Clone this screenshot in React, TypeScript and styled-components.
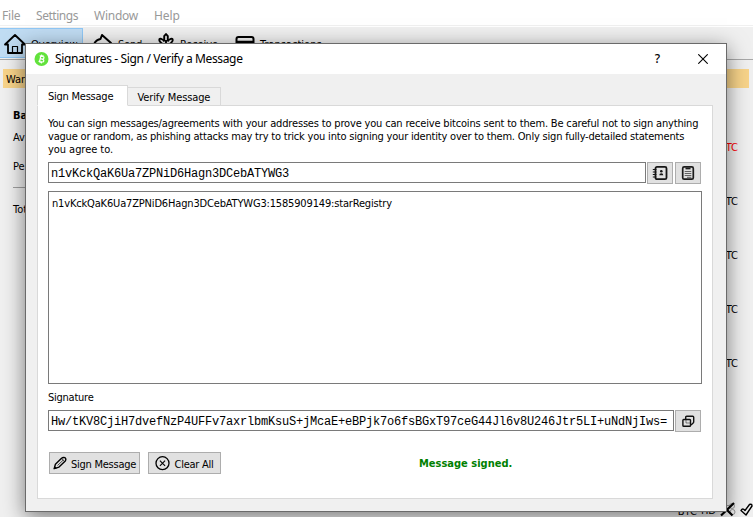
import React from "react";
import styled, { createGlobalStyle } from "styled-components";

const Global = createGlobalStyle`
  * { box-sizing: border-box; }
  html, body { margin: 0; padding: 0; overflow: hidden; }
  body {
    font-family: "DejaVu Sans Condensed", "DejaVu Sans", Tahoma, sans-serif;
    font-stretch: condensed;
    font-size: 11px;
    line-height: 13px;
    color: #000;
  }
`;

const Label = styled.span<{ $ls?: number }>`
  display: block;
  white-space: pre;
  letter-spacing: ${(p) => p.$ls ?? 0}px;
`;

const Desktop = styled.div`
  position: relative;
  width: 753px;
  height: 517px;
  overflow: hidden;
  background: #f0f0f0;
  display: flex;
  flex-direction: column;
`;

const MenuBar = styled.div`
  height: 27px;
  flex: none;
  display: flex;
  padding: 8px 0 0 2px;
  background: #fff;
  border-bottom: 1px solid #fff;
  box-shadow: inset 0 -1px 0 #f0f0f0;
  font-family: "Noto Sans", sans-serif;
  font-stretch: normal;
  font-size: 12px;
  line-height: 15px;
  color: #999;
`;

const MenuItem = styled.span<{ $w: number; $ls: number }>`
  width: ${(p) => p.$w}px;
  letter-spacing: ${(p) => p.$ls}px;
`;

const Toolbar = styled.div`
  height: 33px;
  flex: none;
  display: flex;
  padding-top: 1px;
  border-bottom: 1px solid #a8a8a8;
`;

const Tool = styled.div<{ $w: number; $pl?: number; $active?: boolean }>`
  width: ${(p) => p.$w}px;
  height: 30px;
  display: flex;
  align-items: center;
  gap: 5px;
  padding: 2px 0 0 ${(p) => p.$pl ?? 4}px;
  border: 1px solid ${(p) => (p.$active ? "#90c8f6" : "transparent")};
  border-left: 0;
  background: ${(p) => (p.$active ? "#c0dcf3" : "transparent")};
`;

const Warning = styled.div`
  height: 19px;
  flex: none;
  margin: 9px 4px 0 3px;
  padding: 4px 3px 0;
  background: #f8d48a;
`;

const Overview = styled.div`
  flex: 1;
  display: flex;
  justify-content: space-between;
  padding: 0 15px 0 13px;
`;

const Balances = styled.div`
  width: 300px;
  padding-top: 21px;
`;

const BalanceRow = styled.div<{ $h: number; $bold?: boolean }>`
  height: ${(p) => p.$h}px;
  font-weight: ${(p) => (p.$bold ? 700 : 400)};
`;

const Rule = styled.div`
  height: 1px;
  margin-bottom: 15px;
  background: #a0a0a0;
`;

const Amounts = styled.div`
  display: flex;
  flex-direction: column;
  gap: 41px;
  padding-top: 53px;
`;

const Amount = styled.div<{ $debit?: boolean }>`
  text-align: right;
  color: ${(p) => (p.$debit ? "#f00" : "#000")};
`;

const StatusBar = styled.div`
  height: 16px;
  flex: none;
  display: flex;
  justify-content: flex-end;
  align-items: flex-start;
  gap: 4px;
  padding-top: 1px;
`;

const StatusText = styled.span<{ $up?: boolean }>`
  padding-top: ${(p) => (p.$up ? 2 : 3)}px;
`;

const Dialog = styled.section`
  position: absolute;
  left: 25px;
  top: 43px;
  width: 702px;
  height: 469px;
  display: flex;
  flex-direction: column;
  border: 1px solid #6a6a6a;
  background: #f0f0f0;
  box-shadow: 0 5px 20px rgba(0, 0, 0, 0.5);
`;

const TitleBar = styled.header`
  height: 30px;
  flex: none;
  display: flex;
  align-items: center;
  background: #fff;
  padding: 0 18px 0 8px;
`;

const Title = styled.span`
  flex: 1;
  padding-left: 6px;
  font: 12px/16px "Noto Sans", sans-serif;
  letter-spacing: -0.36px;
`;

const HelpMark = styled.span`
  margin-right: 38px;
  font: 500 12px/16px "Noto Sans", sans-serif;
`;

const Tabs = styled.div`
  height: 21px;
  margin: 11px 0 -1px 11px;
  flex: none;
  display: flex;
  align-items: flex-end;
`;

const Tab = styled.div<{ $active?: boolean }>`
  position: relative;
  width: ${(p) => (p.$active ? 91 : 94)}px;
  height: ${(p) => (p.$active ? 21 : 19)}px;
  margin-left: ${(p) => (p.$active ? 0 : -1)}px;
  padding: ${(p) => (p.$active ? "4px 0 0 10px" : "3px 0 0 9.5px")};
  border: 1px solid #d9d9d9;
  border-bottom-color: ${(p) => (p.$active ? "#fff" : "#d9d9d9")};
  background: ${(p) => (p.$active ? "#fff" : "#f0f0f0")};
  z-index: ${(p) => (p.$active ? 1 : 0)};
`;

const Panel = styled.div`
  width: 676px;
  height: 394px;
  margin-left: 11px;
  padding: 11px 10px 0;
  border: 1px solid #d9d9d9;
  background: #fff;
`;

const Row = styled.div<{ $mt: number }>`
  display: flex;
  margin-top: ${(p) => p.$mt}px;
`;

const Field = styled.div<{ $w: number }>`
  width: ${(p) => p.$w}px;
  height: 21px;
  padding: 4px 0 0 2px;
  border: 1px solid #7a7a7a;
  background: #fff;
  font: 12px/14px "Liberation Mono", "Courier New", monospace;
  letter-spacing: -0.2px;
  white-space: pre;
`;

const MessageBox = styled.div`
  width: 654px;
  height: 193px;
  margin-top: 7px;
  padding: 5px 3px;
  border: 1px solid #7a7a7a;
`;

const Button = styled.button<{ $w: number; $ml: number }>`
  width: ${(p) => p.$w}px;
  height: 22px;
  margin: 0 0 0 ${(p) => p.$ml}px;
  padding: 0;
  display: flex;
  align-items: center;
  justify-content: center;
  gap: 4px;
  border: 1px solid #adadad;
  background: #e1e1e1;
  color: #000;
  font: inherit;
`;

const ButtonText = styled(Label)`
  padding-top: 2px;
`;

const Result = styled.div`
  margin-left: 198px;
  padding-top: 5px;
  font-weight: 700;
  color: #008000;
`;

const HouseIcon = () => (
  <svg width="22" height="22" viewBox="0 0 22 22" fill="none" stroke="#000" strokeWidth="1.8" strokeLinejoin="round" strokeLinecap="round">
    <path d="M1 11.500 11 2l10 9.500h-3v8.500H4v-8.500z" />
    <path d="M8.500 19.500v-6h5v6" strokeWidth="1.2" />
  </svg>
);

const SendIcon = () => (
  <svg width="22" height="22" viewBox="0 0 22 22" fill="none" stroke="#000" strokeWidth="2" strokeLinejoin="round">
    <path d="M2 18C1.500 11 5 6.500 9.500 6L11 2l9 8-9 8v-4c-4 0-7 1-9 4z" />
  </svg>
);

const ReceiveIcon = () => (
  <svg width="18" height="24" viewBox="0 0 18 24" fill="none" stroke="#000" strokeWidth="1.9" strokeLinejoin="round">
    <path d="M7.200 9V4.200L9 2l1.800 2.200V9" />
    <path d="M7.500 9.500C6 7 2 5.500 2.300 8.200S5.500 12 9 14.500c3.500-2.500 6.500-3.600 6.700-6.300S12 7 10.500 9.500M9 8v13M2.500 14c1 4 3.500 5 6.500 5s5.500-1 6.500-5" />
  </svg>
);

const CardIcon = () => (
  <svg width="20" height="18" viewBox="0 0 20 18" fill="none" stroke="#000" strokeWidth="2">
    <rect x="1.500" y="2" width="17" height="14" rx="2" />
    <path d="M2 7h16" strokeWidth="2.500" />
  </svg>
);

const CoinIcon = () => (
  <svg width="15" height="15" viewBox="0 0 15 15">
    <circle cx="7.500" cy="7" r="7" fill="#62e23c" />
    <g transform="rotate(12 7.500 7)" fill="none" stroke="#fff" strokeWidth="1.200">
      <path d="M5 4.200h3.200q1.500 0 1.500 1.300T8.200 6.900H6.100M8.200 6.900q2 0 2 1.500t-2 1.400H5M6.200 4.200v5.600M6.700 2.800v1.200M8.200 2.800v1.200M6.700 10v1.200M8.200 10v1.200" />
    </g>
  </svg>
);

const CloseIcon = () => (
  <svg width="10" height="10" viewBox="0 0 10 10" stroke="#000" strokeWidth="1.100">
    <path d="M.3.300l9.400 9.400M9.700.3.300 9.700" />
  </svg>
);

const AddressBookIcon = () => (
  <svg width="16" height="16" viewBox="0 0 16 16" fill="none" stroke="#151515" strokeWidth="1.800">
    <rect x="3.500" y="1.900" width="11" height="12.300" rx="1.500" />
    <path d="M.8 4.500h3.600M.8 7h3.600M.8 9.500h3.600M.8 12h3.600" strokeWidth="1.200" />
    <circle cx="9.300" cy="6.300" r="1.300" fill="#151515" stroke="none" />
    <path d="M7.300 10.200q0-2 2-2t2 2z" fill="#151515" stroke="none" />
  </svg>
);

const PasteIcon = () => (
  <svg width="14" height="16" viewBox="0 0 14 16" fill="none" stroke="#1c1c1c">
    <rect x="1.700" y="1.900" width="10.600" height="12.300" rx="1.500" strokeWidth="1.700" />
    <path d="M4.500 3.500h5" strokeWidth="1.700" />
    <path d="M3.700 6.500h6.600M3.700 8.500h6.600M3.700 10.500h6.600M6 12.300h4.300" strokeWidth=".9" stroke="#555" />
  </svg>
);

const CopyIcon = () => (
  <svg width="13" height="13" viewBox="0 0 13 13" fill="none" stroke="#111" strokeWidth="1.400">
    <path d="M3.700 4.500V2.200q0-1 1-1h6q1 0 1 1v4.500q0 1-.8 1.600L9 10" />
    <path d="M1.700 4.500h6q.8 0 .8.800v5.200q0 .8-.8.800h-6q-.8 0-.8-.8V5.300q0-.8.800-.8z" />
    <path d="M4 5v3h4" strokeWidth=".5" />
  </svg>
);

const PenIcon = () => (
  <svg width="14" height="14" viewBox="0 0 14 14" fill="none" stroke="#000" strokeWidth="1.400" strokeLinejoin="round">
    <path d="M1.200 12.600l1.200-4.300L8.300 2.400Q10 .9 12 1.700q1.500 1.300.3 3.200L6 11.100z" />
    <path d="M4.500 9.500 10.500 3.800M8.500 2.600l2.500 2.600" strokeWidth=".7" />
    <path d="M.6 13.200l.9-3.200 2.500 2.200z" fill="#000" stroke="none" />
  </svg>
);

const ClearIcon = () => (
  <svg width="15" height="15" viewBox="0 0 15 15" fill="none" stroke="#000">
    <circle cx="7.500" cy="7.200" r="6.500" strokeWidth="1.300" />
    <path d="M4.900 4.600l5.200 5.200M10.100 4.600l-5.200 5.200" strokeWidth="1.100" />
  </svg>
);

const NoProxyIcon = () => (
  <svg width="16" height="15" viewBox="0 0 16 15" fill="none" stroke="#000">
    <g stroke="#999">
      <circle cx="12" cy="4" r="2.500" />
      <circle cx="12.500" cy="10" r="2.500" />
      <path d="M5 3.500h4M4 8h5" />
    </g>
    <path d="M1 13.500 14 1M2 3l10.500 10.500" strokeWidth="2.200" />
  </svg>
);

const SyncedIcon = () => (
  <svg width="13" height="15" viewBox="0 0 13 15" fill="none" stroke="#000" strokeWidth="1.400" strokeLinejoin="round">
    <path d="M1 8.500q1.500-3 4 0L9.500 2.500q2.500-1 2.500 1.500L6 13z" />
  </svg>
);

const amounts = [true, false, false, false, false];

export default function App() {
  return (
    <>
      <Global />
      <Desktop>
        <MenuBar>
          <MenuItem $w={34} $ls={-0.2}>File</MenuItem>
          <MenuItem $w={58} $ls={-0.45}>Settings</MenuItem>
          <MenuItem $w={60} $ls={-0.25}>Window</MenuItem>
          <MenuItem $w={40} $ls={-0.1}>Help</MenuItem>
        </MenuBar>
        <Toolbar>
          <Tool $w={83} $active><HouseIcon /><Label>Overview</Label></Tool>
          <Tool $w={71} $pl={8}><SendIcon /><Label $ls={-0.2}>Send</Label></Tool>
          <Tool $w={78} $pl={3}><ReceiveIcon /><Label $ls={-0.1}>Receive</Label></Tool>
          <Tool $w={110} $pl={3}><CardIcon /><Label>Transactions</Label></Tool>
        </Toolbar>
        <Warning><Label $ls={-0.1}>Warning</Label></Warning>
        <Overview>
          <Balances>
            <BalanceRow $h={22} $bold>Balances</BalanceRow>
            <BalanceRow $h={29}>Available:</BalanceRow>
            <BalanceRow $h={27}>Pending:</BalanceRow>
            <Rule />
            <BalanceRow $h={13}>Total:</BalanceRow>
          </Balances>
          <Amounts>
            {amounts.map((debit, i) => (
              <Amount key={i} $debit={debit}>BTC</Amount>
            ))}
          </Amounts>
        </Overview>
        <StatusBar>
          <StatusText>BTC</StatusText>
          <StatusText $up>HD</StatusText>
          <NoProxyIcon />
          <SyncedIcon />
        </StatusBar>

        <Dialog>
          <TitleBar>
            <CoinIcon />
            <Title>Signatures - Sign / Verify a Message</Title>
            <HelpMark>?</HelpMark>
            <CloseIcon />
          </TitleBar>
          <Tabs>
            <Tab $active><Label $ls={-0.24}>Sign Message</Label></Tab>
            <Tab><Label $ls={-0.12}>Verify Message</Label></Tab>
          </Tabs>
          <Panel>
            <Label $ls={-0.172}>You can sign messages/agreements with your addresses to prove you can receive bitcoins sent to them. Be careful not to sign anything</Label>
            <Label $ls={-0.198}>vague or random, as phishing attacks may try to trick you into signing your identity over to them. Only sign fully-detailed statements</Label>
            <Label $ls={-0.05}>you agree to.</Label>
            <Row $mt={6}>
              <Field $w={598}>n1vKckQaK6Ua7ZPNiD6Hagn3DCebATYWG3</Field>
              <Button $w={26} $ml={1} aria-label="Address book"><AddressBookIcon /></Button>
              <Button $w={26} $ml={2} aria-label="Paste"><PasteIcon /></Button>
            </Row>
            <MessageBox><Label $ls={-0.165}>n1vKckQaK6Ua7ZPNiD6Hagn3DCebATYWG3:1585909149:starRegistry</Label></MessageBox>
            <Row $mt={7}><Label $ls={-0.25}>Signature</Label></Row>
            <Row $mt={6}>
              <Field $w={626}>Hw/tKV8CjiH7dvefNzP4UFFv7axrlbmKsuS+jMcaE+eBPjk7o6fsBGxT97ceG44Jl6v8U246Jtr5LI+uNdNjIws=</Field>
              <Button $w={26} $ml={1} aria-label="Copy"><CopyIcon /></Button>
            </Row>
            <Row $mt={20}>
              <Button $w={91} $ml={1}><PenIcon /><ButtonText $ls={-0.24}>Sign Message</ButtonText></Button>
              <Button $w={73} $ml={8}><ClearIcon /><ButtonText $ls={-0.25}>Clear All</ButtonText></Button>
              <Result><Label>Message signed.</Label></Result>
            </Row>
          </Panel>
        </Dialog>
      </Desktop>
    </>
  );
}
